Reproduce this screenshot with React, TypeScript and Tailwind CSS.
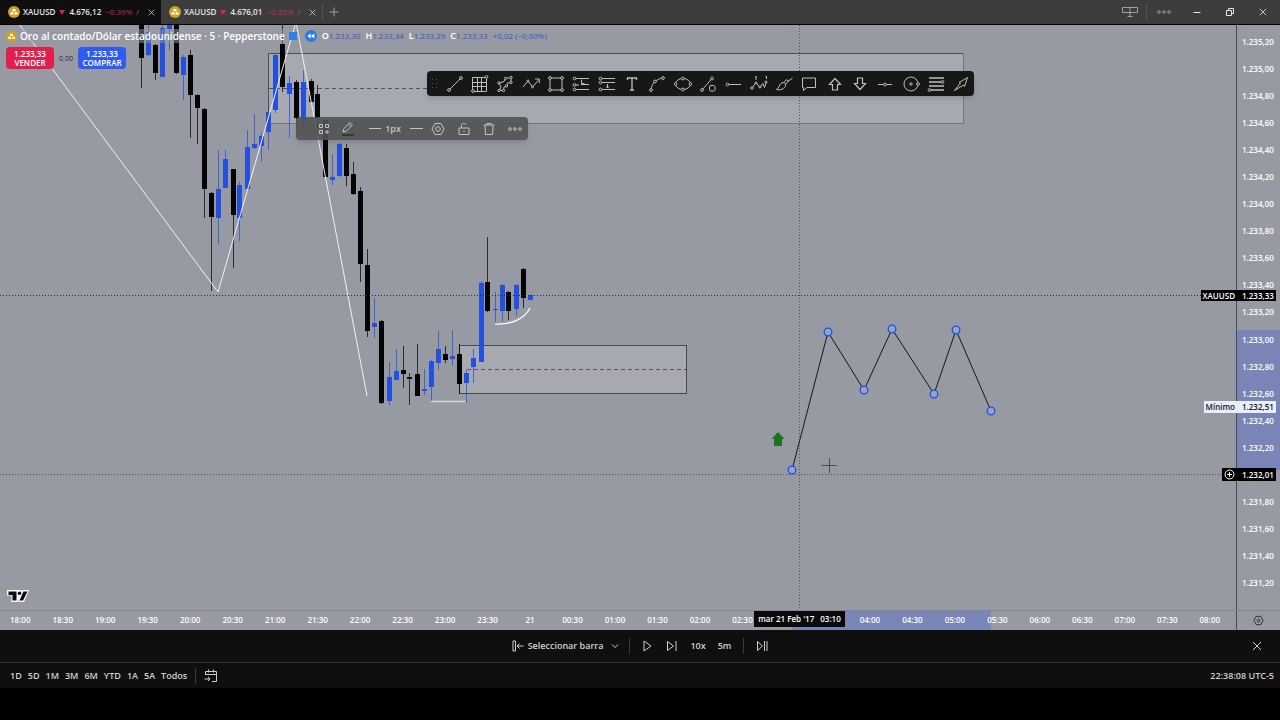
import type { ReactNode } from "react";

type Candle = [x: number, wickTop: number, wickBottom: number, top: number, bottom: number, up: 0 | 1];

const candles: Candle[] = [
  [141, 0, 63, 0, 33, 0],
  [148, 0, 31, 7, 30, 1],
  [155, 19, 55, 20, 48, 0],
  [162, 0, 52, 3, 52, 1],
  [169, 0, 25, 0, 4, 1],
  [176, 0, 49, 0, 48, 0],
  [183, 30, 75, 32, 50, 1],
  [190, 25, 113, 30, 70, 0],
  [197, 69, 119, 70, 83, 0],
  [204, 83, 193, 84, 164, 0],
  [211, 167, 266, 168, 192, 0],
  [218, 125, 219, 164, 193, 1],
  [225, 125, 163, 134, 163, 1],
  [233, 144, 243, 144, 190, 0],
  [239, 157, 216, 160, 193, 1],
  [247, 105, 166, 122, 164, 1],
  [254, 89, 124, 119, 123, 1],
  [261, 108, 137, 111, 121, 1],
  [268, 86, 125, 87, 107, 1],
  [275, 29, 88, 30, 85, 1],
  [282, 0, 67, 19, 62, 0],
  [289, 51, 113, 58, 69, 1],
  [296, 55, 100, 57, 93, 0],
  [303, 45, 105, 57, 96, 1],
  [311, 54, 80, 56, 77, 0],
  [317, 60, 111, 69, 93, 0],
  [325, 94, 152, 95, 152, 0],
  [332, 129, 160, 152, 155, 1],
  [339, 118, 152, 119, 151, 1],
  [346, 119, 161, 123, 151, 0],
  [353, 137, 170, 149, 169, 0],
  [360, 162, 257, 166, 239, 0],
  [367, 224, 312, 240, 306, 0],
  [374, 273, 313, 298, 302, 1],
  [381, 295, 379, 296, 378, 0],
  [389, 337, 380, 352, 376, 1],
  [396, 324, 355, 346, 355, 1],
  [403, 321, 363, 345, 349, 0],
  [409, 348, 380, 352, 354, 0],
  [417, 319, 371, 349, 371, 0],
  [424, 344, 370, 364, 366, 1],
  [431, 335, 376, 336, 362, 1],
  [438, 306, 345, 324, 338, 1],
  [445, 321, 338, 329, 335, 0],
  [452, 305, 341, 331, 334, 1],
  [459, 319, 369, 329, 359, 0],
  [466, 345, 378, 348, 358, 1],
  [473, 324, 358, 333, 342, 1],
  [481, 256, 337, 258, 337, 1],
  [487, 212, 287, 257, 286, 0],
  [495, 267, 297, 284, 285, 1],
  [502, 259, 297, 260, 286, 1],
  [508, 266, 295, 267, 286, 0],
  [516, 259, 291, 260, 284, 1],
  [523, 243, 283, 244, 273, 0],
  [530, 269, 275, 270, 275, 1],
];

const pathNodes = [
  [792, 445],
  [828, 307],
  [864, 365],
  [892, 304],
  [934, 369],
  [956, 305],
  [991, 386],
];

// empty entries sit under the crosshair tags
const prices = [
  "1.235,20", "1.235,00", "1.234,80", "1.234,60", "1.234,40", "1.234,20", "1.234,00",
  "1.233,80", "1.233,60", "1.233,40", "1.233,20", "1.233,00", "1.232,80", "1.232,60",
  "1.232,40", "1.232,20", "", "1.231,80", "1.231,60", "1.231,40", "1.231,20",
];

const times = [
  "18:00", "18:30", "19:00", "19:30", "20:00", "20:30", "21:00", "21:30", "22:00", "22:30",
  "23:00", "23:30", "21", "00:30", "01:00", "01:30", "02:00", "02:30", "", "",
  "04:00", "04:30", "05:00", "05:30", "06:00", "06:30", "07:00", "07:30", "08:00",
];

const ranges = ["1D", "5D", "1M", "3M", "6M", "YTD", "1A", "5A", "Todos"];

const ohlc = [
  ["O", "1.233,30"],
  ["H", "1.233,34"],
  ["L", "1.233,29"],
  ["C", "1.233,33"],
];

function Dot({ x, y, r = 1.4 }: { x: number; y: number; r?: number }) {
  return <circle cx={x} cy={y} r={r} fill="#161817" />;
}

const drawingTools: { name: string; icon: ReactNode }[] = [
  { name: "Línea de tendencia", icon: <><path d="M3 15 15 3" /><Dot x={3} y={15} /><Dot x={15} y={3} /></> },
  { name: "Cuadrícula", icon: <><path d="M1.500 2.500h14v14h-14zM1.500 7.500h14M1.500 11.500h14M6.500 2.500v14M10.500 2.500v14" /><Dot x={2} y={16} /><Dot x={15.500} y={2} /></> },
  { name: "Polígono", icon: <><path d="M3 8 8 6.500 9.500 3.500 15 2.500V7.500l-3.500.500-1 3L8 12l-.500 3.500H3.500L5 12z" /><Dot x={3} y={8} r={1.2} /><Dot x={9.500} y={3.500} r={1.2} /><Dot x={15} y={2.500} r={1.2} /><Dot x={15} y={7.500} r={1.2} /><Dot x={10.500} y={11} r={1.2} /><Dot x={7.500} y={15.500} r={1.2} /><Dot x={3} y={15.500} r={1.2} /></> },
  { name: "Ruta", icon: <><path d="M1 12 6 6l4.500 6L17 4.500M13 4h4.300v4.300" /><Dot x={6} y={6} r={1} /><Dot x={10.5} y={12} r={1} /></> },
  { name: "Rectángulo", icon: <><path d="M3 3h12v12H3z" /><Dot x={3} y={3} /><Dot x={15} y={3} /><Dot x={3} y={15} /><Dot x={15} y={15} /></> },
  { name: "Posición larga", icon: <><path d="M3 3.500h14M9 9.500h8M3 14.500h14M3 10h4M9.500 4.500v4h3" /><Dot x={2.5} y={3.500} /><Dot x={2.500} y={10} /><Dot x={2.500} y={14.500} /></> },
  { name: "Posición corta", icon: <><path d="M3 3.500h14M3 7.500h14M3 14.500h14M9.500 9v4M8 11.500l1.500 1.500 1.500-1.500" /><Dot x={2.5} y={3.500} /><Dot x={2.500} y={7.500} /><Dot x={2.500} y={14.500} /></> },
  { name: "Texto", icon: <path d="M4.500 5V3h9v2M9 3v12M7 15h4" strokeWidth={1.3} /> },
  { name: "Curva", icon: <><path d="M3 15C3.500 9 8 4 15 3" /><Dot x={3} y={15} /><Dot x={7} y={6.500} /><Dot x={15} y={3} /></> },
  { name: "Elipse", icon: <><ellipse cx={9} cy={9} rx={7.500} ry={5.500} /><Dot x={1.500} y={9} /><Dot x={16.500} y={9} /><Dot x={9} y={3.500} /><Dot x={9} y={14.500} /></> },
  { name: "Línea y forma", icon: <><path d="M3 15 13 3.500" /><Dot x={3} y={15} /><Dot x={13} y={3.500} /><rect x={10.500} y={10.500} width={5.500} height={5.500} rx={1.500} fill="#161817" /></> },
  { name: "Rayo horizontal", icon: <><path d="M3 9.500h14" /><Dot x={3.500} y={9.500} /></> },
  { name: "Onda de Elliott", icon: <><path d="m2 13 4-5.500 4 5 3-4 1.500 4L16.500 7M6 1v4M16.500 1v3M5 2l1-1M15.500 2l1-1" /><Dot x={2} y={13} r={1.200} /><Dot x={6} y={8} r={1} /><Dot x={10} y={12} r={1} /><Dot x={16} y={7} r={1} /></> },
  { name: "Pincel", icon: <path d="M1.500 14.500C4 13.500 4 10 6 8.500 7.500 7 9.500 7.500 10.500 9 11.500 12 7 16 1.500 14.500zM8.500 7.500l3.500-3 1 2L17.500 3M10.500 9l3-2.500" /> },
  { name: "Comentario", icon: <path d="M2.500 3h13v9.500H7L3.500 15.500V12.500h-1z" /> },
  { name: "Flecha arriba", icon: <path d="m9 3.500 5.500 6h-3V15h-5V9.500h-3z" strokeWidth={1.200} /> },
  { name: "Flecha abajo", icon: <path d="m9 14.500 5.500-6h-3V3h-5v5.500h-3z" strokeWidth={1.200} /> },
  { name: "Línea horizontal", icon: <><path d="M2 9.500h14" /><Dot x={9} y={9.500} /></> },
  { name: "Círculo", icon: <><circle cx={9} cy={9} r={7} /><Dot x={9} y={9} r={1.200} /><Dot x={16} y={9} /></> },
  { name: "Retroceso de Fibonacci", icon: <><path d="M2 3h15M2 7h13M2 11h15M4 15h13" strokeWidth={1.300} /><Dot x={15.500} y={7} /><Dot x={2.500} y={15} /></> },
  { name: "Flecha", icon: <path d="m2.500 15.500 6-7.500-1.500-.500 8.500-5-3 9-1-1.500z" /> },
];

function ToolIcon({ children }: { children: ReactNode }) {
  return (
    <svg viewBox="0 0 18 18" className="size-[18px]" fill="none" stroke="currentColor" strokeWidth={1} aria-hidden="true">
      {children}
    </svg>
  );
}

function GoldIcon({ className }: { className: string }) {
  return (
    <svg viewBox="0 0 12 12" className={className} aria-hidden="true">
      <circle cx="6" cy="6" r="6" fill="#d0a21e" />
      <path d="M4.800 3h2.400l.7 2.200H4.100zM2.800 6.200h2.400l.5 2.200H2zM6.800 6.200h2.400l.8 2.200H6.300z" fill="#fff" />
    </svg>
  );
}

function CrossIcon({ className }: { className: string }) {
  return (
    <svg viewBox="0 0 10 10" className={className} fill="none" stroke="currentColor" aria-hidden="true">
      <path d="m1 1 8 8M9 1 1 9" />
    </svg>
  );
}

function Tab({ price, change, active }: { price: string; change: string; active?: boolean }) {
  return (
    <div className={`flex w-[161px] items-center pl-2 pr-0.5 ${active ? "bg-[#0f0f0f]" : ""}`}>
      <button className="flex min-w-0 flex-1 items-center whitespace-nowrap text-[8px]">
        <GoldIcon className="mr-[3px] size-3 shrink-0" />
        <span className="font-semibold">XAUUSD</span>
        <svg viewBox="0 0 6 5" className="mx-1 h-[5px] w-1.5 shrink-0" aria-hidden="true">
          <path d="M0 0h6L3 5z" fill="#d8254c" />
        </svg>
        <span className="font-semibold">{price}</span>
        <span className="ml-1 text-[#c42c4b]">{change}</span>
        <span className="ml-1 text-neutral-500">/</span>
      </button>
      <button aria-label="Cerrar pestaña" className="p-1">
        <CrossIcon className="size-[7px]" />
      </button>
    </div>
  );
}

function TabBar() {
  return (
    <header className="flex h-[25px] shrink-0 border-b border-black bg-[#3d3d3d] text-neutral-200">
      <Tab price="4.676,12" change="−0.39%" active />
      <Tab price="4.676,01" change="−0.35%" />
      <div className="my-1 border-l border-neutral-600" />
      <button aria-label="Nueva pestaña" className="px-1.5 text-neutral-400">
        <svg viewBox="0 0 10 10" className="size-2.5" fill="none" stroke="currentColor" aria-hidden="true">
          <path d="M5 .500v9M.500 5h9" />
        </svg>
      </button>
      <div className="ml-auto flex items-center">
        <button aria-label="Diseño" className="px-2 text-neutral-400">
          <svg viewBox="0 0 16 12" className="h-3 w-4" fill="none" stroke="currentColor" aria-hidden="true">
            <path d="M.500 1.500h15v5H.500zM8 1.500v9M5.500 10.500h5" />
          </svg>
        </button>
        <div className="h-4 border-l border-neutral-600" />
        <button aria-label="Más" className="px-2.5 text-neutral-400">
          <svg viewBox="0 0 14 4" className="h-1 w-3.5" fill="none" stroke="currentColor" strokeWidth={0.9} aria-hidden="true">
            <circle cx="2" cy="2" r="1.300" />
            <circle cx="7" cy="2" r="1.300" />
            <circle cx="12" cy="2" r="1.300" />
          </svg>
        </button>
        <button aria-label="Minimizar" className="w-[33px] pl-3">
          <svg viewBox="0 0 8 8" className="size-2" stroke="currentColor" aria-hidden="true">
            <path d="M.500 4.500h7" />
          </svg>
        </button>
        <button aria-label="Restaurar" className="w-[33px] pl-3">
          <svg viewBox="0 0 8 8" className="size-2" fill="none" stroke="currentColor" aria-hidden="true">
            <path d="M.500 2.500h5v5h-5zM2.500 2.500v-2h5v5h-2" />
          </svg>
        </button>
        <button aria-label="Cerrar" className="w-[33px] pl-3">
          <CrossIcon className="size-2" />
        </button>
      </div>
    </header>
  );
}

function Plot() {
  return (
    <svg className="absolute inset-0 size-full" aria-hidden="true">
      <rect x="268.500" y="28.500" width="695" height="70" fill="#fff" fillOpacity="0.150" stroke="#73757b" />
      <path d="M268.500 98V28.500H963" fill="none" stroke="#4c4e53" />
      <path d="M269 63.500H963" stroke="#5d4a68" strokeDasharray="4 3" />
      <rect x="459.500" y="320.500" width="227" height="48" fill="#fff" fillOpacity="0.150" stroke="#45474b" />
      <path d="M467 344.500H686" stroke="#6c4670" strokeDasharray="4 3" />
      {candles.map(([x, wickTop, wickBottom, top, bottom, up]) => (
        <g key={x} fill={up ? "#2350e0" : "#050505"}>
          <rect x={x} y={wickTop} width={1} height={wickBottom - wickTop} opacity={0.75} />
          <rect x={x - 2} y={top} width={5} height={bottom - top} />
        </g>
      ))}
      <path d="M16-5 218 267 296-3 367 371" fill="none" stroke="#f1f1f4" />
      <path d="M495 299c14 1 29-4 35-16" fill="none" stroke="#fff" strokeWidth="1.200" />
      <path d="M431 376.500h35" stroke="#d4d6da" strokeWidth="1.500" />
      <path d="M0 270.500H1236" stroke="#2b2c30" strokeDasharray="1 2" />
      <path d="M0 449.500H1236M799.500 0V585" stroke="#505258" strokeDasharray="1 2" />
      <path d="m778 407 6.500 7H782v7h-8v-7h-2.500z" fill="#1d7420" />
      <polyline points={pathNodes.map((p) => p.join(",")).join(" ")} fill="none" stroke="#16171a" />
      {pathNodes.map(([x, y]) => (
        <circle key={x} cx={x} cy={y} r="3.800" fill="#8ea4d6" stroke="#2a50cc" strokeWidth="1.300" />
      ))}
      <path d="M821.500 440.500h15M829.500 433v15" stroke="#4d4a49" />
    </svg>
  );
}

function Legend() {
  return (
    <div className="absolute left-1.5 top-1 flex h-[14px] items-center whitespace-nowrap">
      <div className="flex items-center bg-[#989aa3]/50 text-[10px] leading-[14px] font-semibold text-white">
        <GoldIcon className="mr-[3px] size-[11px]" />
        Oro al contado/Dólar estadounidense · 5 · Pepperstone
      </div>
      <svg viewBox="0 0 10 8" className="ml-1 h-2 w-2.5" aria-hidden="true">
        <path d="M0 0h8.500L7.500 4l1 4H0z" fill="#2a7fe8" />
      </svg>
      <button aria-label="Repetición" className="ml-1.5">
        <svg viewBox="0 0 12 12" className="size-3" aria-hidden="true">
          <circle cx="6" cy="6" r="6" fill="#2a78ea" />
          <path d="M5.700 3.500v5L2.400 6zM9.300 3.500v5L6 6z" fill="#fff" />
        </svg>
      </button>
      <div className="ml-[5px] flex gap-[5px] text-[8px] leading-[14px] font-medium text-[#3c50c8]">
        {ohlc.map(([label, value]) => (
          <span key={label}>
            <b className="text-[9px] font-semibold text-white">{label}</b>
            {value}
          </span>
        ))}
        <span>+0,02 (−0,00%)</span>
      </div>
    </div>
  );
}

function TradeButtons() {
  return (
    <div className="absolute left-1.5 top-[22px] flex items-center text-center text-[8px] leading-[9px] font-semibold text-white">
      <button className="w-12 rounded bg-[#e01f4c] py-0.5">
        1.233,33
        <br />
        VENDER
      </button>
      <span className="w-6 text-[7px] font-normal text-[#26272b]">0,00</span>
      <button className="w-12 rounded bg-[#2f5cf0] py-0.5">
        1.233,33
        <br />
        COMPRAR
      </button>
    </div>
  );
}

function DrawingToolbar() {
  return (
    <div className="absolute left-[427px] top-[46px] flex h-[25px] w-[547px] items-center rounded bg-[#161817] text-[#bcbebd] shadow-md">
      <svg viewBox="0 0 5 9" className="mx-[5px] h-[9px] w-[5px] shrink-0" fill="#555" aria-hidden="true">
        <path d="M0 0h1v1H0zM4 0h1v1H4zM0 4h1v1H0zM4 4h1v1H4zM0 8h1v1H0zM4 8h1v1H4z" />
      </svg>
      {drawingTools.map((tool) => (
        <button key={tool.name} aria-label={tool.name} className="flex flex-1 justify-center">
          <ToolIcon>{tool.icon}</ToolIcon>
        </button>
      ))}
    </div>
  );
}

function ObjectToolbar() {
  return (
    <div className="absolute left-[296px] top-[92px] flex h-[23px] w-[232px] items-center rounded-sm bg-[#505253]/90 pl-[19px] text-[#c2c3c5] shadow-md">
      <button aria-label="Plantillas" className="flex w-[18px] justify-center">
        <svg viewBox="0 0 12 12" className="size-3" fill="none" stroke="currentColor" aria-hidden="true">
          <path d="M1.500 1.500h3v3h-3zM7.500 1.500h3v3h-3zM1.500 7.500h3v3h-3zM7 9h4M9 7v4" />
        </svg>
      </button>
      <button aria-label="Color" className="flex w-[30px] justify-center">
        <svg viewBox="0 0 14 16" className="h-4 w-3.5" fill="none" stroke="currentColor" aria-hidden="true">
          <path d="m2 11 .800-3.300L9 1.500l2.500 2.500-6.200 6.200zM7.500 3 10 5.500" />
          <path d="M1 14h12" stroke="#2c2d2e" strokeWidth="1.500" />
        </svg>
      </button>
      <button className="flex w-[44px] items-center justify-center gap-1 text-[9px] font-semibold">
        <span className="w-3 border-t border-current" />
        1px
      </button>
      <button aria-label="Estilo de línea" className="flex w-[18px] justify-center">
        <span className="w-[13px] border-t border-current" />
      </button>
      <button aria-label="Ajustes" className="flex flex-1 justify-center">
        <svg viewBox="0 0 14 14" className="size-3.5" fill="none" stroke="currentColor" aria-hidden="true">
          <path d="M4 1.500h6L13 7l-3 5.500H4L1 7z" />
          <circle cx="7" cy="7" r="2.300" />
        </svg>
      </button>
      <button aria-label="Bloquear" className="flex flex-1 justify-center">
        <svg viewBox="0 0 12 14" className="h-3.5 w-3" fill="none" stroke="currentColor" aria-hidden="true">
          <path d="M1 6h10v6.500H1zM3.500 6V3.500C3.500.800 8 .800 8 3M6 8.500v1.500" />
        </svg>
      </button>
      <button aria-label="Eliminar" className="flex flex-1 justify-center">
        <svg viewBox="0 0 12 14" className="h-3.5 w-3" fill="none" stroke="currentColor" aria-hidden="true">
          <path d="M.500 3h11M2 3l.500 9.500h7L10 3M4 3V1.500h4V3" />
        </svg>
      </button>
      <button aria-label="Más opciones" className="flex flex-1 justify-center">
        <svg viewBox="0 0 14 4" className="h-1 w-3.5" fill="none" stroke="currentColor" aria-hidden="true">
          <circle cx="2" cy="2" r="1.300" />
          <circle cx="7" cy="2" r="1.300" />
          <circle cx="12" cy="2" r="1.300" />
        </svg>
      </button>
    </div>
  );
}

function PriceAxis() {
  return (
    <div className="relative flex w-11 shrink-0 flex-col border-l border-[#4a4c50] text-[8px] font-semibold text-white">
      <div className="absolute inset-x-0 top-[305px] h-[140px] bg-[#7985b6]" />
      <div className="relative flex flex-1 flex-col justify-between pb-5 pt-2.5 pl-[5px]">
        {prices.map((price, i) => (
          <span key={i} className="min-h-[14px] leading-[14px]">{price}</span>
        ))}
      </div>
      <div className="absolute right-1 top-[265px] flex whitespace-nowrap bg-black leading-[11px]">
        <span className="px-0.5">XAUUSD</span>
        <span className="w-[39px] pl-[5px]">1.233,33</span>
      </div>
      <div className="absolute right-1 top-[376px] flex whitespace-nowrap bg-[#e9eefb] leading-[12px] text-[#14151a]">
        <span className="px-0.5">Mínimo</span>
        <span className="w-[39px] pl-[5px]">1.232,51</span>
      </div>
      <div className="absolute right-1 top-[443px] flex items-center bg-black leading-[13px]">
        <button aria-label="Añadir alerta" className="px-0.5">
          <svg viewBox="0 0 11 11" className="size-[11px]" fill="none" stroke="currentColor" aria-hidden="true">
            <circle cx="5.500" cy="5.500" r="4.500" />
            <path d="M5.500 3v5M3 5.500h5" />
          </svg>
        </button>
        <span className="w-[39px] pl-[5px]">1.232,01</span>
      </div>
    </div>
  );
}

function TimeAxis() {
  return (
    <div className="relative flex h-5 shrink-0 border-t border-[#83858d] text-[8px] leading-[18px] font-semibold text-white">
      <div className="relative min-w-0 flex-1">
        <div className="absolute inset-y-0 left-[792px] w-[199px] bg-[#7985b6]" />
        <div className="relative -ml-px mr-[5px] flex">
          {times.map((time, i) => (
            <span key={i} className="min-w-0 flex-1 text-center">{time}</span>
          ))}
        </div>
        <div className="absolute left-[754px] top-0 flex h-4 w-[91px] items-center justify-center gap-1.5 whitespace-nowrap bg-[#0a0a0a]">
          <span>mar 21 Feb '17</span>
          <span>03:10</span>
        </div>
      </div>
      <div className="flex w-11 items-center justify-center border-l border-[#4a4c50]">
        <button aria-label="Ajustes del eje">
          <svg viewBox="0 0 12 12" className="size-[11px]" fill="none" stroke="#2b2c30" aria-hidden="true">
            <path d="M3.500 1.500h5L11 6l-2.500 4.500h-5L1 6z" />
            <circle cx="6" cy="6" r="1.500" />
          </svg>
        </button>
      </div>
    </div>
  );
}

function ReplayBar() {
  return (
    <div className="relative flex h-[33px] shrink-0 items-center justify-center border-b border-[#303030] text-[9px] font-semibold text-[#cfcfcf]">
      <div className="flex items-center">
        <button className="flex items-center gap-1">
          <svg viewBox="0 0 12 12" className="size-3" fill="none" stroke="currentColor" aria-hidden="true">
            <path d="M1 1h2.500v10H1zM5 6h6.500M7.500 3.500 5 6l2.500 2.500" />
          </svg>
          Seleccionar barra
        </button>
        <button aria-label="Abrir menú" className="ml-2 mr-2.5">
          <svg viewBox="0 0 8 6" className="h-1.5 w-2" fill="none" stroke="currentColor" aria-hidden="true">
            <path d="m1 1.500 3 3 3-3" />
          </svg>
        </button>
        <div className="h-4 border-l border-[#3a3a3a]" />
        <button aria-label="Reproducir" className="ml-3">
          <svg viewBox="0 0 12 12" className="size-3" fill="none" stroke="currentColor" aria-hidden="true">
            <path d="M2 1v10l7-5z" />
          </svg>
        </button>
        <button aria-label="Avanzar" className="ml-3">
          <svg viewBox="0 0 12 12" className="size-3" fill="none" stroke="currentColor" aria-hidden="true">
            <path d="M1.500 1.500v9l6-4.500zM10 1v10" />
          </svg>
        </button>
        <button className="ml-3">10x</button>
        <button className="ml-3">5m</button>
        <div className="ml-3 h-4 border-l border-[#3a3a3a]" />
        <button aria-label="Ir al tiempo real" className="ml-3">
          <svg viewBox="0 0 12 12" className="size-3" fill="none" stroke="currentColor" aria-hidden="true">
            <path d="M1.500 1.500v9l5-4.500zM8.500 1v10M11 1v10" />
          </svg>
        </button>
      </div>
      <button aria-label="Cerrar repetición" className="absolute right-[18px]">
        <CrossIcon className="size-2.5" />
      </button>
    </div>
  );
}

function RangeBar() {
  return (
    <footer className="flex h-[25px] shrink-0 items-center pl-2.5 pr-1.5 text-[9px] font-semibold text-[#cfcfcf]">
      <div className="flex gap-1.5">
        {ranges.map((range) => (
          <button key={range}>{range}</button>
        ))}
      </div>
      <div className="ml-2 h-4 border-l border-[#3a3a3a]" />
      <button aria-label="Ir a fecha" className="ml-2">
        <svg viewBox="0 0 14 14" className="size-3.5" fill="none" stroke="currentColor" aria-hidden="true">
          <path d="M1.500 6V2.500h11v10H8M1.500 5.500h11M4.500.500v3M9.500.500v3M.500 10H6M4 8l2 2-2 2" />
        </svg>
      </button>
      <span className="ml-auto">22:38:08 UTC-5</span>
    </footer>
  );
}

export default function App() {
  return (
    <div className="flex h-screen min-h-[480px] flex-col overflow-hidden bg-black pb-8 font-['Open_Sans','Noto_Sans',sans-serif]">
      <TabBar />
      <main className="flex min-h-0 flex-1 flex-col bg-[#989aa3]">
        <div className="flex min-h-0 flex-1">
          <div className="relative min-w-0 flex-1 overflow-hidden">
            <Plot />
            <Legend />
            <TradeButtons />
            <DrawingToolbar />
            <ObjectToolbar />
            <svg viewBox="0 0 24 14" className="absolute bottom-[7px] left-1.5 h-3.5 w-6" aria-hidden="true">
              <path d="M1 1h14l1.500 1L17 1h6l-5 12h-5.500l1-3-2 3H5.500V6.500H1z" fill="#fff" />
              <path d="M2.500 2.500h8v9h-4V6h-4zM17.500 2.500h4L17 11.500h-3.500z" fill="#0a0a0a" />
              <circle cx="13.500" cy="4.200" r="1.800" fill="#0a0a0a" />
            </svg>
          </div>
          <PriceAxis />
        </div>
        <TimeAxis />
      </main>
      <div className="shrink-0 bg-[#0f0f0f]">
        <ReplayBar />
        <RangeBar />
      </div>
    </div>
  );
}
